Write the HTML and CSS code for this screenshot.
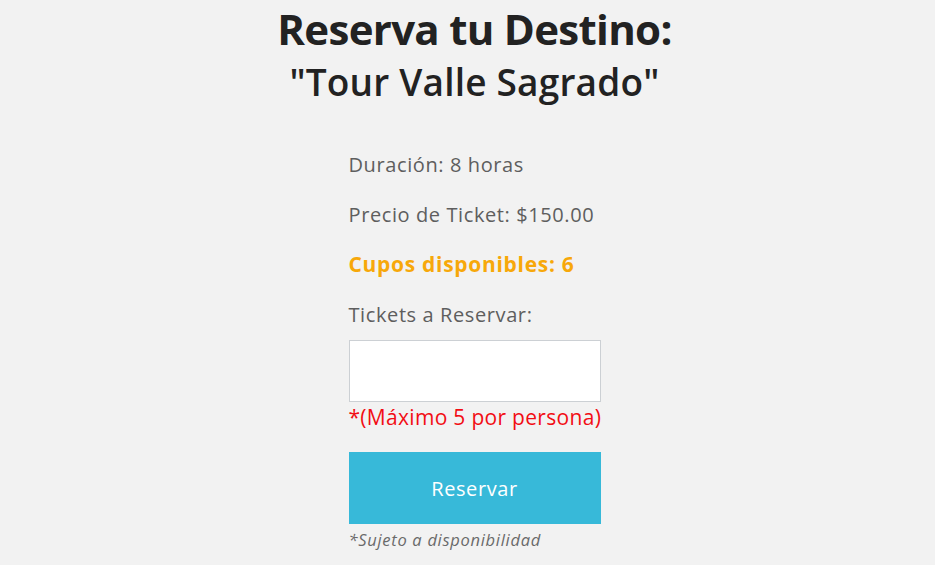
FILE: index.html
```html
<!DOCTYPE html>
<html lang="es">
<head>
<meta charset="utf-8">
<title>Reserva tu Destino</title>
<link rel="stylesheet" href="styles.css">
</head>
<body>
<main class="page">
  <h1 class="title">Reserva tu Destino:</h1>
  <h2 class="subtitle">"Tour Valle Sagrado"</h2>
  <form class="form">
    <p class="info">Duración: 8 horas</p>
    <p class="info">Precio de Ticket: $150.00</p>
    <p class="info info--cupos">Cupos disponibles: 6</p>
    <label class="info" for="tickets">Tickets a Reservar:</label>
    <input class="field" id="tickets" type="text">
    <p class="note">*(Máximo 5 por persona)</p>
    <button class="btn" type="button">Reservar</button>
    <p class="small">*Sujeto a disponibilidad</p>
  </form>
</main>
</body>
</html>
```
FILE: styles.css
```css
html, body {
  margin: 0;
  padding: 0;
  background: #f2f2f2;
}
body {
  font-family: "Open Sans", "DejaVu Sans", sans-serif;
  color: #5e5e5e;
}
.page {
  padding-left: 14px;
  display: flex;
  flex-direction: column;
  align-items: center;
}
.title {
  margin: 0;
  font-size: 42px;
  font-weight: 700;
  color: #222;
  line-height: 58px;
  letter-spacing: -0.7px;
}
.subtitle {
  margin: 2px 0 0;
  font-size: 37px;
  font-weight: 600;
  color: #222;
  line-height: 44px;
  letter-spacing: 0.2px;
}
.form {
  margin-top: 49px;
  width: 252px;
  display: flex;
  flex-direction: column;
}
.info {
  margin: 0 0 27px;
  font-size: 20px;
  line-height: 23px;
  letter-spacing: 0.6px;
  color: #5e5e5e;
}
.info--cupos {
  color: #f7a80a;
  font-size: 21px;
  font-weight: 700;
  letter-spacing: 0.7px;
  white-space: nowrap;
}
label.info {
  margin-bottom: 14px;
}
.field {
  box-sizing: border-box;
  width: 252px;
  height: 62px;
  margin: 0;
  border: 1px solid #ccd0d4;
  background: #fff;
  outline: none;
}
.note {
  margin: 1px 0 0;
  font-size: 21px;
  line-height: 28px;
  letter-spacing: 0.3px;
  color: #f20d14;
  white-space: nowrap;
}
.btn {
  margin-top: 21px;
  width: 252px;
  height: 72px;
  border: none;
  background: #37b9d9;
  color: #fff;
  font-family: inherit;
  font-size: 20px;
  font-weight: 500;
  letter-spacing: 0.6px;
}
.small {
  margin: 4px 0 0;
  font-size: 16.5px;
  line-height: 24px;
  letter-spacing: 0.7px;
  font-style: italic;
  color: #6a6a6a;
  white-space: nowrap;
}
```
